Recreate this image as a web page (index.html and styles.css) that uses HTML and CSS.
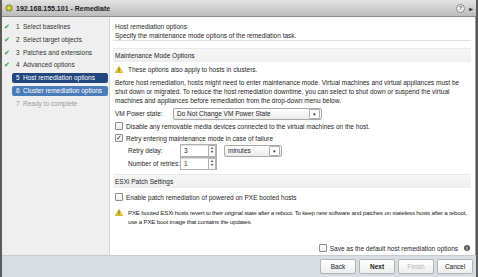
FILE: index.html
```html
<!DOCTYPE html>
<html lang="en">
<head>
    <meta charset="UTF-8">
    <title>192.168.155.101 - Remediate</title>
    <link rel="stylesheet" href="styles.css">
</head>
<body>
    <div class="window">
        <div class="titlebar">
            <svg class="app-icon" width="8" height="8" viewBox="0 0 8 8">
                <circle cx="4" cy="4" r="3.5" fill="#8a9a3a"/>
                <path d="M1.5 4 L4 1.5 L6.5 4 L4 6.5 Z" fill="#e8d24a"/>
            </svg>
            <span class="title">192.168.155.101 - Remediate</span>
            <span class="title-tools">
                <span class="help">?</span>
                <span class="expand">&#9656;&#9656;</span>
            </span>
        </div>

        <div class="body">
            <ul class="steps">
                <li class="done"><span class="check">&#10004;</span><span class="num">1</span>Select baselines</li>
                <li class="done"><span class="check">&#10004;</span><span class="num">2</span>Select target objects</li>
                <li class="done"><span class="check">&#10004;</span><span class="num">3</span>Patches and extensions</li>
                <li class="done"><span class="check">&#10004;</span><span class="num">4</span>Advanced options</li>
                <li class="current"><span class="num">5</span>Host remediation options</li>
                <li class="next"><span class="num">6</span>Cluster remediation options</li>
                <li class="todo"><span class="num">7</span>Ready to complete</li>
            </ul>

            <div class="main">
                <div class="page-head">
                    <div>Host remediation options</div>
                    <div>Specify the maintenance mode options of the remediation task.</div>
                </div>

                <div class="section-title">Maintenance Mode Options</div>
                <div class="note">
                    <svg class="warn" width="8" height="7" viewBox="0 0 8 7"><path d="M4 0.3 L7.7 6.7 L0.3 6.7 Z" fill="#f2d21c" stroke="#a08a10" stroke-width="0.5"/><rect x="3.6" y="2.2" width="0.8" height="2.4" fill="#333"/><rect x="3.6" y="5.2" width="0.8" height="0.8" fill="#333"/></svg>
                    <span>These options also apply to hosts in clusters.</span>
                </div>
                <p class="para">Before host remediation, hosts might need to enter maintenance mode. Virtual machines and virtual appliances must be shut down or migrated. To reduce the host remediation downtime, you can select to shut down or suspend the virtual machines and appliances before remediation from the drop-down menu below.</p>

                <div class="field-row">
                    <span class="label-vm">VM Power state:</span>
                    <span class="select select-wide">Do Not Change VM Power State<span class="drop">&#9662;</span></span>
                </div>
                <div class="check-row"><span class="box"></span>Disable any removable media devices connected to the virtual machines on the host.</div>
                <div class="check-row"><span class="box checked">&#10003;</span>Retry entering maintenance mode in case of failure</div>
                <div class="field-row indent">
                    <span class="label-retry">Retry delay:</span>
                    <span class="spin">3<span class="arrows">&#9652;<br>&#9662;</span></span>
                    <span class="select select-small">minutes<span class="drop">&#9662;</span></span>
                </div>
                <div class="field-row indent">
                    <span class="label-retry">Number of retries:</span>
                    <span class="spin">1<span class="arrows">&#9652;<br>&#9662;</span></span>
                </div>

                <div class="section-title section-esxi">ESXi Patch Settings</div>
                <div class="check-row"><span class="box"></span>Enable patch remediation of powered on PXE booted hosts</div>
                <div class="note note-pxe">
                    <svg class="warn" width="8" height="7" viewBox="0 0 8 7"><path d="M4 0.3 L7.7 6.7 L0.3 6.7 Z" fill="#f2d21c" stroke="#a08a10" stroke-width="0.5"/><rect x="3.6" y="2.2" width="0.8" height="2.4" fill="#333"/><rect x="3.6" y="5.2" width="0.8" height="0.8" fill="#333"/></svg>
                    <span>PXE booted ESXi hosts revert to their original state after a reboot. To keep new software and patches on stateless hosts after a reboot, use a PXE boot image that contains the updates.</span>
                </div>

                <div class="save-row">
                    <span class="box"></span>Save as the default host remediation options
                    <span class="info">i</span>
                </div>
            </div>
        </div>

        <div class="footer">
            <span class="btn">Back</span>
            <span class="btn btn-next">Next</span>
            <span class="btn btn-off">Finish</span>
            <span class="btn">Cancel</span>
        </div>
    </div>
</body>
</html>
```

FILE: styles.css
```css
body {
    margin: 0;
    font-family: "Liberation Sans", Arial, sans-serif;
    font-size: 6.5px;
    color: #1e1e1e;
    background: #fff;
}

.window {
    width: 478px;
    height: 277px;
    box-sizing: border-box;
    border-left: 2px solid #5b5b5b;
    border-right: 2px solid #5b5b5b;
    display: flex;
    flex-direction: column;
    overflow: hidden;
}

.titlebar {
    height: 17px;
    box-sizing: border-box;
    background: linear-gradient(#e4e4e4, #bcbcbc);
    border-bottom: 1px solid #8a8a8a;
    display: flex;
    align-items: center;
    padding: 0 3px 0 3px;
}

    .titlebar .app-icon {
        margin-right: 3px;
    }

    .titlebar .title {
        font-weight: bold;
        font-size: 7px;
        color: #222;
    }

.title-tools {
    margin-left: auto;
    display: flex;
    align-items: center;
    gap: 4px;
}

    .title-tools .help {
        width: 7px;
        height: 7px;
        border-radius: 50%;
        border: 1px solid #888;
        background: #eee;
        font-size: 5px;
        font-weight: bold;
        text-align: center;
        line-height: 7px;
        color: #555;
    }

    .title-tools .expand {
        font-size: 6px;
        letter-spacing: -2px;
        color: #333;
        margin-right: 2px;
    }

.body {
    flex: 1;
    display: flex;
    min-height: 0;
}

.steps {
    width: 108px;
    margin: 0;
    padding: 5px 0 0 0;
    list-style: none;
    background: #efefef;
    border-right: 1px solid #d4d4d4;
    box-sizing: border-box;
}

    .steps li {
        height: 10px;
        line-height: 10px;
        margin-bottom: 2.8px;
        margin-left: 10px;
        margin-right: 1px;
        padding-left: 4px;
        border-radius: 2px;
        color: #333;
        position: relative;
        white-space: nowrap;
    }

    .steps .num {
        display: inline-block;
        width: 7px;
    }

    .steps .check {
        position: absolute;
        left: -8px;
        top: 0;
        color: #3a9a3a;
        font-size: 7px;
    }

    .steps .current {
        background: #23477f;
        color: #fff;
    }

    .steps .next {
        background: #4b7cba;
        color: #fff;
    }

    .steps .todo {
        color: #9a9a9a;
    }

.main {
    flex: 1;
    background: #fff;
    padding: 5px 4px 0 3px;
    position: relative;
    border-right: 1px solid #9a9a9a;
}

.page-head {
    padding-left: 2px;
    line-height: 9px;
    border-bottom: 1px solid #e2e2e2;
    margin-bottom: 7px;
}

.section-title {
    background: linear-gradient(#f7f7f7, #efefef);
    border-top: 1px solid #eaeaea;
    height: 13px;
    line-height: 13px;
    padding-left: 2px;
    margin-bottom: 3px;
}

.section-esxi {
    margin-top: 4px;
}

.note {
    display: flex;
    align-items: flex-start;
    padding-left: 2px;
    line-height: 9px;
}

    .note .warn {
        margin-right: 5px;
        margin-top: 1px;
        flex: none;
    }

.para {
    margin: 4px 0 0 2px;
    line-height: 9px;
}

.field-row {
    display: flex;
    align-items: center;
    height: 13px;
    padding-left: 2px;
    margin-top: 2px;
    white-space: nowrap;
}

.label-vm {
    width: 58px;
}

.indent {
    padding-left: 15px;
    margin-top: 0;
}

.label-retry {
    width: 52px;
}

.select {
    height: 10px;
    line-height: 10px;
    border: 1px solid #a8a8a8;
    border-radius: 2px;
    background: linear-gradient(#ffffff, #ececec);
    padding-left: 3px;
    display: flex;
    align-items: center;
    box-sizing: content-box;
}

    .select .drop {
        margin-left: auto;
        width: 9px;
        height: 8px;
        border: 1px solid #b0b0b0;
        border-radius: 1px;
        font-size: 5px;
        line-height: 8px;
        text-align: center;
        margin-right: 1px;
        background: #fff;
    }

.select-wide {
    width: 144px;
}

.select-small {
    width: 53px;
    margin-left: 7px;
}

.spin {
    width: 32px;
    height: 11px;
    border: 1px solid #b0b0b0;
    box-shadow: inset 0 1px 1px #ddd;
    padding-left: 3px;
    display: flex;
    align-items: center;
}

    .spin .arrows {
        margin-left: auto;
        width: 6px;
        height: 10px;
        border: 1px solid #b0b0b0;
        border-radius: 1px;
        font-size: 4px;
        line-height: 4.5px;
        text-align: center;
        background: #f6f6f6;
    }

.check-row {
    display: flex;
    align-items: center;
    height: 12px;
    padding-left: 2px;
}

.box {
    width: 6px;
    height: 6px;
    border: 1px solid #8c8c8c;
    border-radius: 1px;
    background: linear-gradient(#fff, #ececec);
    margin-right: 3px;
    font-size: 7px;
    line-height: 6px;
    text-align: center;
    color: #222;
    flex: none;
}

.note-pxe {
    margin-top: 5px;
}

    .note-pxe span {
        font-size: 6.2px;
        letter-spacing: -0.22px;
    }

.save-row {
    position: absolute;
    right: 5px;
    bottom: 3px;
    display: flex;
    align-items: center;
}

    .save-row .info {
        width: 6px;
        height: 6px;
        border-radius: 50%;
        background: #555;
        color: #fff;
        font-size: 5px;
        line-height: 6px;
        text-align: center;
        font-weight: bold;
        margin-left: 6px;
    }

.footer {
    height: 21px;
    background: #d8dde4;
    border-top: 1px solid #c6ccd4;
    display: flex;
    justify-content: flex-end;
    align-items: center;
    gap: 3px;
    padding-right: 3px;
}

.btn {
    width: 34px;
    height: 13px;
    line-height: 13px;
    text-align: center;
    border: 1px solid #b3b3b3;
    border-radius: 2px;
    background: linear-gradient(#ffffff, #eeeeee);
    color: #222;
}

.btn-next {
    font-weight: bold;
}

.btn-off {
    color: #b5b5b5;
}
```
